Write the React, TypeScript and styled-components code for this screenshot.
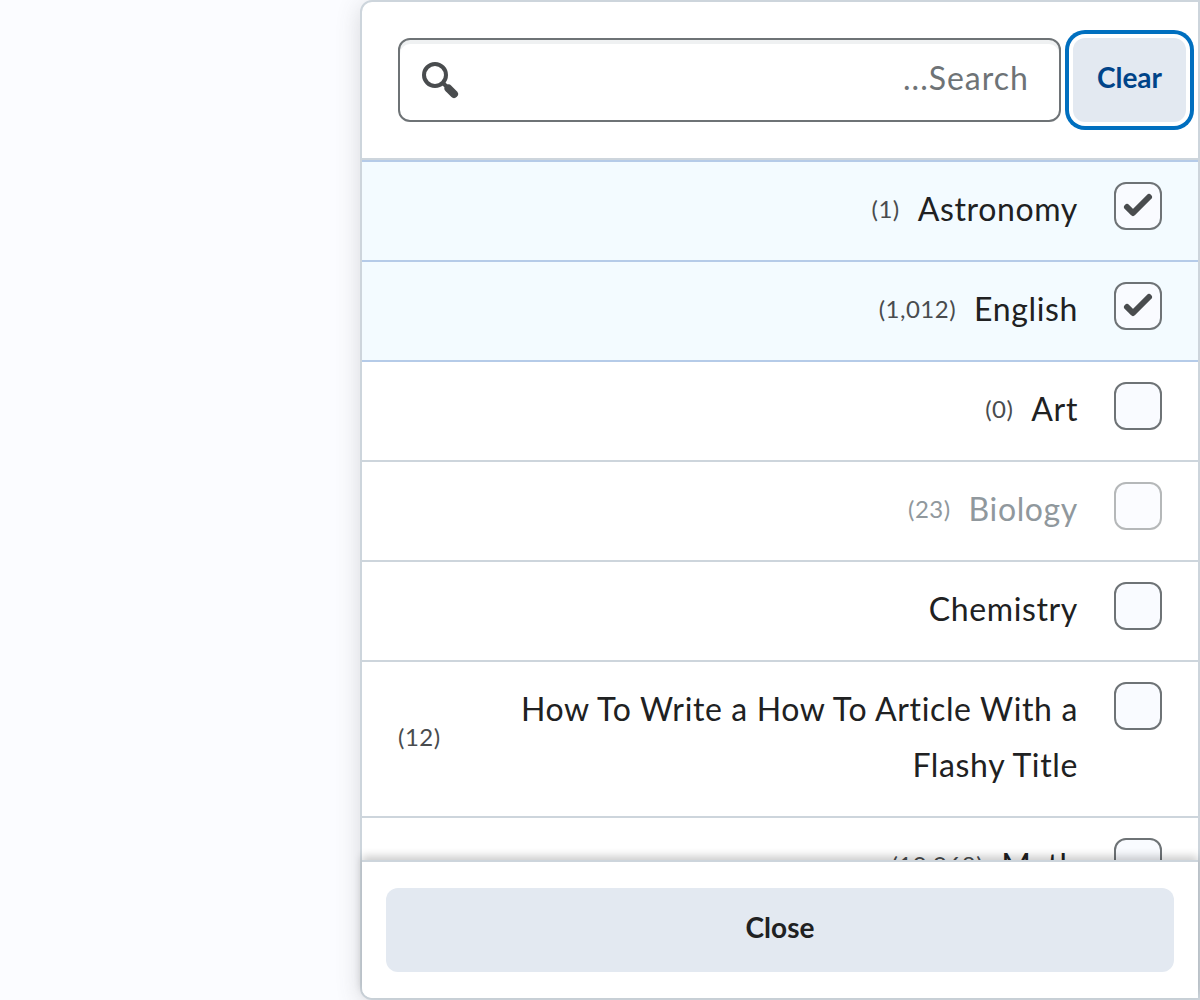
import React from "react";
import styled, { createGlobalStyle } from "styled-components";

const Global = createGlobalStyle`
  * { box-sizing: border-box; }
  body {
    margin: 0;
    background: #fbfcff;
    color: #202122;
    font-family: Lato, "Open Sans", sans-serif;
    font-size: 32px;
    overflow: hidden;
  }
`;
const Page = styled.main`
  height: 100vh;
  display: flex;
`;
const Panel = styled.section`
  flex: 1;
  margin-left: 30%;
  min-width: 0;
  display: flex;
  flex-direction: column;
  background: #fff;
  border: 2px solid #cdd5dc;
  border-radius: 12px 0 0 12px;
  box-shadow: 0 4px 24px rgba(73, 76, 78, 0.2);
`;
const Header = styled.header`
  display: flex;
  align-items: center;
  gap: 12px;
  padding: 36px 12px 36px 36px;
  border-bottom: 2px solid #cdd5dc;
`;
const SearchBox = styled.label`
  flex: 1;
  display: flex;
  align-items: center;
  height: 84px;
  padding: 0 30px 0 20px;
  border: 2px solid #6e7376;
  border-radius: 12px;
  box-shadow: inset 0 4px 0 #eff1f2;
`;
const SearchIcon = styled.svg`
  flex: none;
  width: 40px;
  height: 40px;
`;
const SearchInput = styled.input`
  flex: 1;
  min-width: 0;
  padding: 0 0 5px;
  border: 0;
  outline: 0;
  background: transparent;
  font: inherit;
  letter-spacing: 1px;
  color: #202122;
  &::placeholder { color: #6e7376; opacity: 1; }
`;
const Button = styled.button`
  height: 84px;
  padding: 0 24px 6px;
  border: 0;
  border-radius: 12px;
  background: #e3e9f1;
  color: #202122;
  font: 700 28px/36px Lato, "Open Sans", sans-serif;
  cursor: pointer;
`;
const ClearButton = styled(Button)`
  color: #004489;
  box-shadow: 0 0 0 4px #fff, 0 0 0 8px #006fbf;
`;
const List = styled.ul`
  flex: 1;
  min-height: 0;
  margin: 0;
  padding: 0;
  list-style: none;
  overflow: hidden;
`;
const Row = styled.li<{ $selected: boolean; $afterSelected: boolean }>`
  border-top: 2px solid ${(p) => (p.$selected || p.$afterSelected ? "#b5cbe8" : "#cdd5dc")};
  background: ${(p) => (p.$selected ? "#f3fbff" : "#fff")};
`;
const Option = styled.label`
  display: flex;
  align-items: flex-start;
  gap: 36px;
  padding: 19px 36px 23px;
`;
const Text = styled.span<{ $disabled: boolean }>`
  flex: 1;
  display: flex;
  align-items: center;
  justify-content: flex-end;
  gap: 18px;
  line-height: 56px;
  text-align: right;
  color: ${(p) => (p.$disabled ? "#90989d" : "#202122")};
`;
const Name = styled.span`
  letter-spacing: 0.02em;
`;
const Count = styled.span<{ $disabled: boolean }>`
  flex: none;
  font-size: 24px;
  letter-spacing: 0.02em;
  color: ${(p) => (p.$disabled ? "#90989d" : "#494c4e")};
`;
const CheckCell = styled.span`
  flex: none;
  display: grid;
  margin-top: 1px;
  > * { grid-area: 1 / 1; }
`;
const Check = styled.input`
  appearance: none;
  width: 48px;
  height: 48px;
  margin: 0;
  border: 2px solid #6e7376;
  border-radius: 12px;
  background: #f9fbff;
  &:disabled { opacity: 0.5; }
  & + svg { visibility: hidden; }
  &:checked + svg { visibility: visible; }
`;
const Tick = styled.svg`
  width: 48px;
  height: 48px;
  pointer-events: none;
`;
const Footer = styled.footer`
  position: relative;
  padding: 26px 24px;
  display: flex;
  background: #fff;
  border-top: 2px solid #cdd5dc;
  border-radius: 0 0 0 10px;
  box-shadow: 0 -4px 8px rgba(0, 0, 0, 0.2);
`;
const CloseButton = styled(Button)`
  flex: 1;
`;

const subjects = [
  { name: "Astronomy", count: "(1)", selected: true },
  { name: "English", count: "(1,012)", selected: true },
  { name: "Art", count: "(0)" },
  { name: "Biology", count: "(23)", disabled: true },
  { name: "Chemistry" },
  { name: "How To Write a How To Article With a Flashy Title", count: "(12)" },
  { name: "Math", count: "(10,968)" },
];

export default function App() {
  return (
    <Page>
      <Global />
      <Panel>
        <Header>
          <SearchBox>
            <SearchIcon viewBox="0 0 40 40" aria-hidden="true">
              <circle cx="15" cy="15" r="11" fill="none" stroke="#494c4e" strokeWidth="4" />
              <path d="M23 23l5 5" stroke="#494c4e" strokeWidth="4" />
              <path d="M28.5 28.5l5.500 5.500" stroke="#494c4e" strokeWidth="8" strokeLinecap="round" />
            </SearchIcon>
            <SearchInput dir="rtl" placeholder="Search..." aria-label="Search" />
          </SearchBox>
          <ClearButton type="button">Clear</ClearButton>
        </Header>
        <List>
          {subjects.map((s, i) => (
            <Row key={s.name} $selected={!!s.selected} $afterSelected={!!subjects[i - 1]?.selected}>
              <Option>
                <Text $disabled={!!s.disabled}>
                  {s.count && <Count $disabled={!!s.disabled}>{s.count}</Count>}
                  <Name>{s.name}</Name>
                </Text>
                <CheckCell>
                  <Check type="checkbox" defaultChecked={s.selected} disabled={s.disabled} />
                  <Tick viewBox="0 0 48 48" aria-hidden="true">
                    <path d="M13 25l6 6L35 15" fill="none" stroke="#494c4e" strokeWidth="6" strokeLinecap="round" strokeLinejoin="round" />
                  </Tick>
                </CheckCell>
              </Option>
            </Row>
          ))}
        </List>
        <Footer>
          <CloseButton type="button">Close</CloseButton>
        </Footer>
      </Panel>
    </Page>
  );
}
